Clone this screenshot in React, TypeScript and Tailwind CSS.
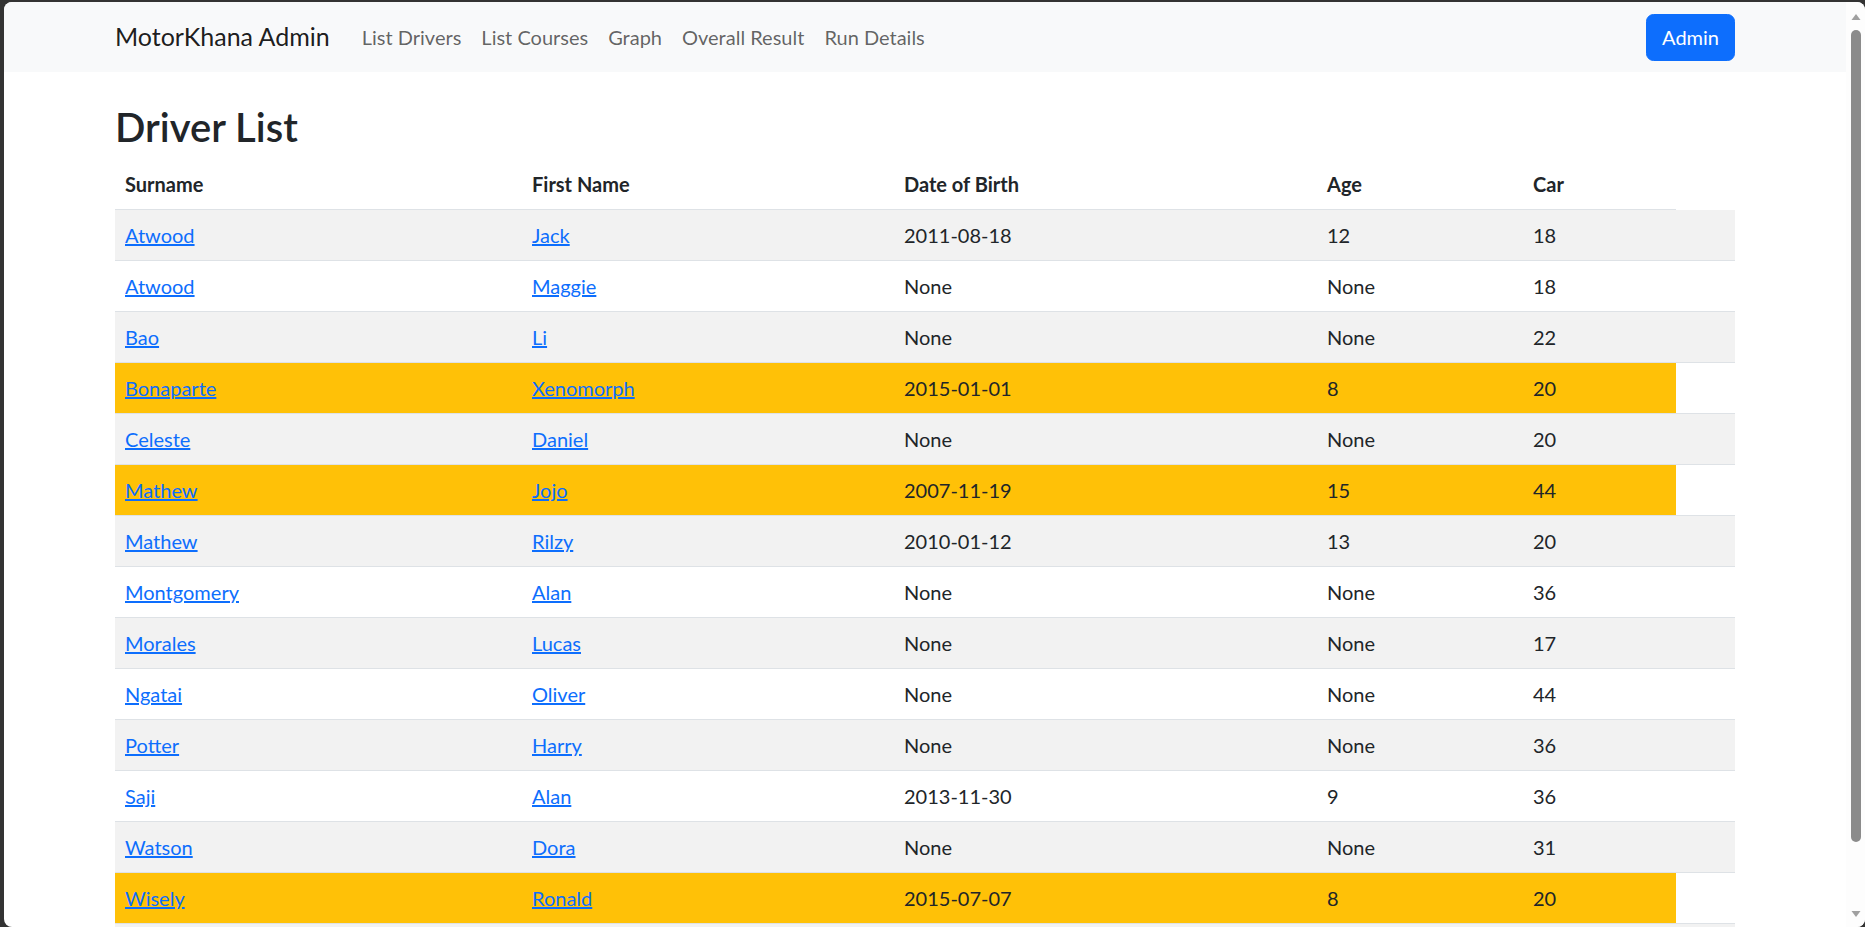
import React from 'react';

type Driver = {
  surname: string;
  first: string;
  dob: string;
  age: string;
  car: string;
  junior?: boolean;
};

const drivers: Driver[] = [
  { surname: 'Atwood', first: 'Jack', dob: '2011-08-18', age: '12', car: '18' },
  { surname: 'Atwood', first: 'Maggie', dob: 'None', age: 'None', car: '18' },
  { surname: 'Bao', first: 'Li', dob: 'None', age: 'None', car: '22' },
  { surname: 'Bonaparte', first: 'Xenomorph', dob: '2015-01-01', age: '8', car: '20', junior: true },
  { surname: 'Celeste', first: 'Daniel', dob: 'None', age: 'None', car: '20' },
  { surname: 'Mathew', first: 'Jojo', dob: '2007-11-19', age: '15', car: '44', junior: true },
  { surname: 'Mathew', first: 'Rilzy', dob: '2010-01-12', age: '13', car: '20' },
  { surname: 'Montgomery', first: 'Alan', dob: 'None', age: 'None', car: '36' },
  { surname: 'Morales', first: 'Lucas', dob: 'None', age: 'None', car: '17' },
  { surname: 'Ngatai', first: 'Oliver', dob: 'None', age: 'None', car: '44' },
  { surname: 'Potter', first: 'Harry', dob: 'None', age: 'None', car: '36' },
  { surname: 'Saji', first: 'Alan', dob: '2013-11-30', age: '9', car: '36' },
  { surname: 'Watson', first: 'Dora', dob: 'None', age: 'None', car: '31' },
  { surname: 'Wisely', first: 'Ronald', dob: '2015-07-07', age: '8', car: '20', junior: true },
];

const navLinks = ['List Drivers', 'List Courses', 'Graph', 'Overall Result', 'Run Details'];

function Scrollbar() {
  return (
    <div className="w-[19px] shrink-0 bg-[#fdfdfd] flex flex-col items-center">
      <svg className="mt-[11px] ml-[1px]" width="10" height="8" viewBox="0 0 10 8">
        <path d="M5 1 L9.5 7 L0.5 7 Z" fill="#a0a0a0" />
      </svg>
      <div className="mt-[9px] ml-[1px] w-[10px] h-[812px] rounded-full bg-[#8b8b8b]" />
      <div className="flex-1" />
      <svg className="mb-[9px] ml-[1px]" width="10" height="8" viewBox="0 0 10 8">
        <path d="M0.5 1 L9.5 1 L5 7 Z" fill="#a0a0a0" />
      </svg>
    </div>
  );
}

export default function App() {
  return (
    <div
      className="h-screen w-full overflow-hidden bg-[#333333] pt-[2px] pl-[4px] flex"
      style={{ fontFamily: 'Lato, "Liberation Sans", sans-serif' }}
    >
      <div className="flex-1 flex bg-white rounded-[8px] overflow-hidden">
        <div className="flex-1 min-w-0 text-[20px] leading-[30px] text-[#212529]">
          {/* Navbar */}
          <nav className="bg-[#f8f9fa] py-[10px]">
            <div className="w-[1650px] mx-auto px-[15px] flex items-center">
              <span className="text-[25px] leading-[37.5px] py-[6.25px] mr-[22px] text-[rgba(0,0,0,0.9)]">
                MotorKhana Admin
              </span>
              <ul className="flex items-center">
                {navLinks.map((l) => (
                  <li key={l}>
                    <a className="block px-[10px] py-[10px] text-[rgba(0,0,0,0.62)]">{l}</a>
                  </li>
                ))}
              </ul>
              <div className="flex-1" />
              <button className="h-[47px] px-[15px] rounded-[7.5px] bg-[#0d6efd] border border-[#0d6efd] text-white">
                Admin
              </button>
            </div>
          </nav>

          {/* Content */}
          <div className="w-[1650px] mx-auto px-[15px] mt-[31px]">
            <h1 className="text-[40px] leading-[48px] font-semibold mb-[8px]">Driver List</h1>
            <table className="table-fixed w-[1620px] border-collapse">
              <colgroup>
                <col className="w-[407px]" />
                <col className="w-[372px]" />
                <col className="w-[423px]" />
                <col className="w-[206px]" />
                <col className="w-[153px]" />
                <col className="w-[59px]" />
              </colgroup>
              <thead>
                <tr>
                  {['Surname', 'First Name', 'Date of Birth', 'Age', 'Car'].map((h) => (
                    <th
                      key={h}
                      className="text-left font-bold p-[10px] border-b border-[#dee2e6]"
                    >
                      {h}
                    </th>
                  ))}
                </tr>
              </thead>
              <tbody>
                {drivers.map((d, i) => {
                  const striped = i % 2 === 0;
                  const cell = d.junior
                    ? 'bg-[#ffc107]'
                    : striped
                    ? 'bg-[#f2f2f2]'
                    : 'bg-white';
                  const tail = striped ? 'bg-[#f2f2f2]' : 'bg-white';
                  const base = 'p-[10px] border-b border-[#dee2e6] whitespace-nowrap';
                  return (
                    <tr key={i}>
                      <td className={`${base} ${cell}`}>
                        <a className="text-[#0d6efd] underline">{d.surname}</a>
                      </td>
                      <td className={`${base} ${cell}`}>
                        <a className="text-[#0d6efd] underline">{d.first}</a>
                      </td>
                      <td className={`${base} ${cell}`}>{d.dob}</td>
                      <td className={`${base} ${cell}`}>{d.age}</td>
                      <td className={`${base} ${cell}`}>{d.car}</td>
                      <td className={`${base} ${tail}`}></td>
                    </tr>
                  );
                })}
                <tr>
                  <td colSpan={6} className="h-[51px] bg-[#f2f2f2] border-b border-[#dee2e6]"></td>
                </tr>
              </tbody>
            </table>
          </div>
        </div>
        <Scrollbar />
      </div>
    </div>
  );
}
